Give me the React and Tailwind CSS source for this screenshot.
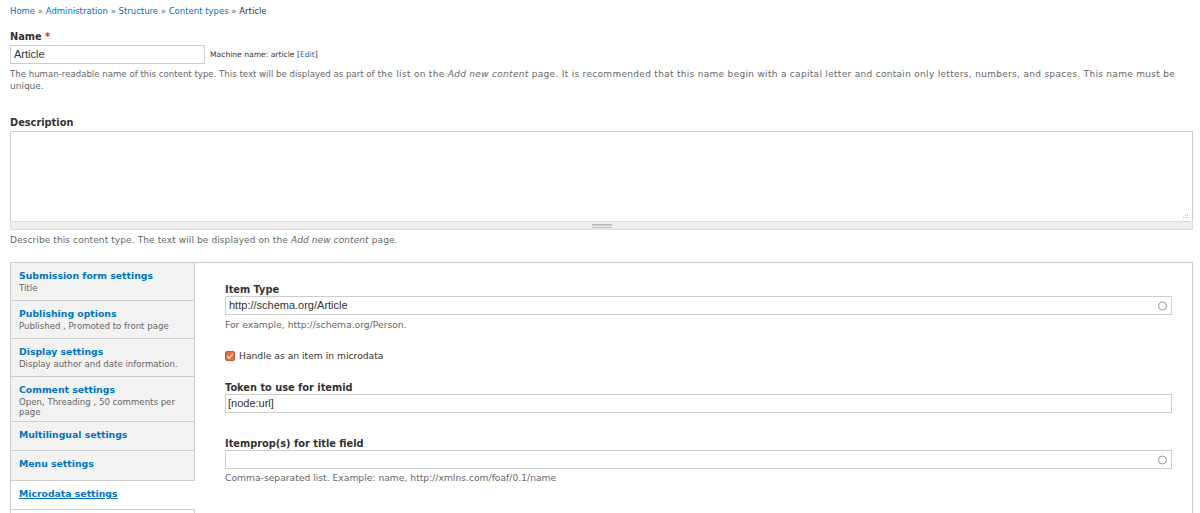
import React from "react";

const Throbber = () => (
  <span className="absolute right-[4px] top-1/2 -translate-y-1/2 w-[9px] h-[9px] rounded-full border border-[#9a9a9a]" />
);

const Label = ({ children, className = "" }) => (
  <div className={"text-[9.8px] leading-[10px] font-bold text-[#333] " + className}>{children}</div>
);

const Help = ({ children, className = "" }) => (
  <div className={"text-[9.2px] leading-[12px] text-[#666] " + className}>{children}</div>
);

const TabItem = ({ title, summary, h, selected }) => (
  <div
    className={
      "px-[8px] pt-[7px] border-b border-[#ccc] " +
      h +
      " " +
      (selected ? "bg-white -mr-px" : "bg-[#f2f2f2]")
    }
  >
    <div
      className={
        "text-[9.3px] leading-[12px] font-bold text-[#0074bd] " + (selected ? "underline" : "")
      }
    >
      {title}
    </div>
    {summary && (
      <div className="mt-[1px] text-[8.6px] leading-[10px] text-[#666]">{summary}</div>
    )}
  </div>
);

export default function App() {
  return (
    <div className="bg-white w-[1200px] h-[513px] overflow-hidden font-['DejaVu_Sans',sans-serif] text-[#333] pl-[10px] pr-[7px] pt-[5px]">
      <div className="text-[8.5px] leading-[12px] text-[#0074bd]">
        Home <span className="text-[#666]">»</span> Administration{" "}
        <span className="text-[#666]">»</span> Structure <span className="text-[#666]">»</span>{" "}
        Content types <span className="text-[#666]">»</span>{" "}
        <span className="text-[#333]">Article</span>
      </div>

      <div className="mt-[14px] text-[9.8px] leading-[12px] font-bold text-[#333]">
        Name <span className="text-[#e0281c]">*</span>
      </div>
      <div className="mt-[2px] flex items-center">
        <div className="w-[195px] h-[19px] border border-[#ccc] pl-[3px] flex items-center font-['Liberation_Sans',sans-serif] text-[11px] text-[#333]">
          Article
        </div>
        <span className="ml-[5px] text-[7.6px] text-[#333]">
          Machine name: article [<span className="text-[#0074bd]">Edit</span>]
        </span>
      </div>
      <div className="mt-[4px] w-[1180px] text-[9px] leading-[12px] text-[#666]">
        <span className="whitespace-nowrap">
          <span className="text-[8.6px]">
            The human-readable name of this content type. This text will be displayed as part of
          </span>{" "}
          <span className="tracking-[0.3px]">
            the list on the <em>Add new content</em> page. It is recommended that this name begin
            with a capital letter and contain only letters, numbers, and spaces. This name must be
          </span>
        </span>
        <br />
        unique.
      </div>

      <div className="mt-[25px] text-[9.8px] leading-[12px] font-bold text-[#333]">Description</div>
      <div className="mt-[2px] w-[1183px]">
        <div className="relative h-[90px] border border-[#ccc] border-b-0">
          <svg className="absolute right-[3px] bottom-[2px]" width="6" height="6" viewBox="0 0 6 6">
            <g fill="#bbb">
              <rect x="4" y="0" width="1" height="1" />
              <rect x="2" y="2" width="1" height="1" />
              <rect x="4" y="2" width="1" height="1" />
              <rect x="0" y="4" width="1" height="1" />
              <rect x="2" y="4" width="1" height="1" />
              <rect x="4" y="4" width="1" height="1" />
            </g>
          </svg>
        </div>
        <div className="h-[9px] bg-[#eee] border border-[#ddd] flex items-center justify-center">
          <div className="w-[20px] h-[4px] border-y border-[#bbb] flex flex-col justify-center">
            <div className="h-px bg-[#ccc]" />
          </div>
        </div>
      </div>
      <div className="mt-[4px] text-[9px] tracking-[0.1px] leading-[12px] text-[#666]">
        Describe this content type. The text will be displayed on the <em>Add new content</em> page.
      </div>

      <div className="mt-[16px] w-[1183px] h-[260px] border border-[#ccc] flex">
        <div className="w-[183px] shrink-0 flex flex-col relative z-10">
          <TabItem title="Submission form settings" summary="Title" h="h-[38px]" />
          <TabItem
            title="Publishing options"
            summary="Published , Promoted to front page"
            h="h-[38px]"
          />
          <TabItem
            title="Display settings"
            summary="Display author and date information."
            h="h-[38px]"
          />
          <TabItem
            title="Comment settings"
            summary={
              <>
                Open, Threading , 50 comments per
                <br />
                page
              </>
            }
            h="h-[45px]"
          />
          <TabItem title="Multilingual settings" h="h-[29px]" />
          <TabItem title="Menu settings" h="h-[30px]" />
          <TabItem title="Microdata settings" h="h-[29px]" selected />
        </div>
        <div className="flex-1 border-l border-[#ccc] pl-[30px] pr-[20px] pt-[22px]">
          <Label>Item Type</Label>
          <div className="relative mt-[1px] h-[19px] border border-[#ccc] pl-[3px] flex items-center font-['Liberation_Sans',sans-serif] text-[11px] text-[#333]">
            http://schema.org/Article
            <Throbber />
          </div>
          <Help className="mt-[4px]">For example, http://schema.org/Person.</Help>

          <div className="mt-[19px] flex items-center h-[12px]">
            <svg width="10" height="10" viewBox="0 0 10 10" className="shrink-0">
              <rect x="0.5" y="0.5" width="9" height="9" rx="1.5" fill="#e2703f" stroke="#c95a2c" />
              <path d="M2.2 5.2 L4.2 7.2 L7.8 2.8" fill="none" stroke="#fbe3d6" strokeWidth="1.4" />
            </svg>
            <span className="ml-[4px] text-[9.2px] text-[#333]">Handle as an item in microdata</span>
          </div>

          <Label className="mt-[21px]">Token to use for itemid</Label>
          <div className="mt-[1px] h-[19px] border border-[#ccc] pl-[2px] flex items-center font-['Liberation_Sans',sans-serif] text-[11px] text-[#333]">
            [node:url]
          </div>

          <Label className="mt-[26px]">Itemprop(s) for title field</Label>
          <div className="relative mt-[1px] h-[19px] border border-[#ccc]">
            <Throbber />
          </div>
          <Help className="mt-[3px]">Comma-separated list. Example: name, http://xmlns.com/foaf/0.1/name</Help>
        </div>
      </div>
    </div>
  );
}
